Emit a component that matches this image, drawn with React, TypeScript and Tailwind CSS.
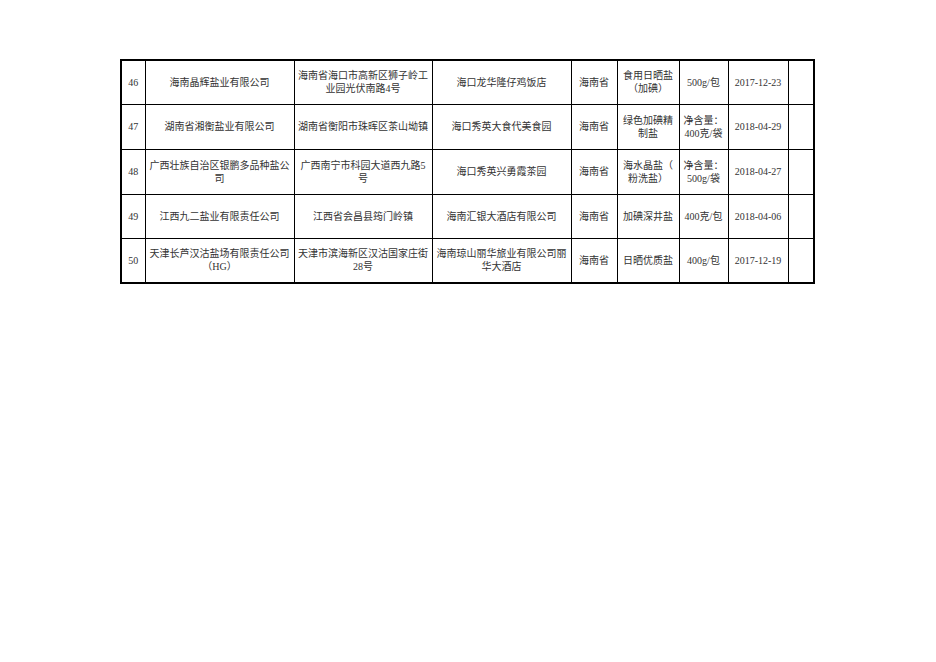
import type { ReactNode } from 'react';

type Row = {
  no: string;
  maker: ReactNode;
  addr: ReactNode;
  seller: ReactNode;
  prov: string;
  name: ReactNode;
  spec: ReactNode;
  date: string;
};

const rows: Row[] = [
  {
    no: '46',
    maker: '海南晶辉盐业有限公司',
    addr: (
      <>
        海南省海口市高新区狮子岭工
        <br />
        业园光伏南路4号
      </>
    ),
    seller: '海口龙华隆仔鸡饭店',
    prov: '海南省',
    name: (
      <>
        食用日晒盐
        <br />
        （加碘）
      </>
    ),
    spec: '500g/包',
    date: '2017-12-23',
  },
  {
    no: '47',
    maker: '湖南省湘衡盐业有限公司',
    addr: '湖南省衡阳市珠晖区茶山坳镇',
    seller: '海口秀英大食代美食园',
    prov: '海南省',
    name: (
      <>
        绿色加碘精
        <br />
        制盐
      </>
    ),
    spec: (
      <>
        净含量：
        <br />
        400克/袋
      </>
    ),
    date: '2018-04-29',
  },
  {
    no: '48',
    maker: (
      <>
        广西壮族自治区银鹏多品种盐公
        <br />司
      </>
    ),
    addr: (
      <>
        广西南宁市科园大道西九路5
        <br />号
      </>
    ),
    seller: '海口秀英兴勇霞茶园',
    prov: '海南省',
    name: (
      <>
        海水晶盐（
        <br />
        粉洗盐）
      </>
    ),
    spec: (
      <>
        净含量：
        <br />
        500g/袋
      </>
    ),
    date: '2018-04-27',
  },
  {
    no: '49',
    maker: '江西九二盐业有限责任公司',
    addr: '江西省会昌县筠门岭镇',
    seller: '海南汇银大酒店有限公司',
    prov: '海南省',
    name: '加碘深井盐',
    spec: '400克/包',
    date: '2018-04-06',
  },
  {
    no: '50',
    maker: (
      <>
        天津长芦汉沽盐场有限责任公司
        <br />
        （HG）
      </>
    ),
    addr: (
      <>
        天津市滨海新区汉沽国家庄街
        <br />
        28号
      </>
    ),
    seller: (
      <>
        海南琼山丽华旅业有限公司丽
        <br />
        华大酒店
      </>
    ),
    prov: '海南省',
    name: '日晒优质盐',
    spec: '400g/包',
    date: '2017-12-19',
  },
];

const heights = ['h-[44px]', 'h-[45px]', 'h-[45px]', 'h-[44px]', 'h-[45px]'];

const cell = 'border border-black px-0 text-center align-middle whitespace-nowrap';

export default function App() {
  return (
    <div className="min-h-[662px] w-[936px] bg-white pl-[120px] pt-[59px]">
      <table
        className="table-fixed border-collapse border-2 border-black text-[10px] leading-[13px] text-[#333]"
        style={{ fontFamily: '"Liberation Serif", "Noto Sans CJK SC", serif' }}
      >
        <colgroup>
          <col className="w-[24px]" />
          <col className="w-[149px]" />
          <col className="w-[138px]" />
          <col className="w-[139px]" />
          <col className="w-[46px]" />
          <col className="w-[62px]" />
          <col className="w-[49px]" />
          <col className="w-[60px]" />
          <col className="w-[26px]" />
        </colgroup>
        <tbody>
          {rows.map((r, i) => (
            <tr key={r.no} className={heights[i]}>
              <td className={cell}>{r.no}</td>
              <td className={cell}>{r.maker}</td>
              <td className={cell}>{r.addr}</td>
              <td className={cell}>{r.seller}</td>
              <td className={cell}>{r.prov}</td>
              <td className={cell}>{r.name}</td>
              <td className={cell}>{r.spec}</td>
              <td className={cell}>{r.date}</td>
              <td className={cell}></td>
            </tr>
          ))}
        </tbody>
      </table>
    </div>
  );
}
